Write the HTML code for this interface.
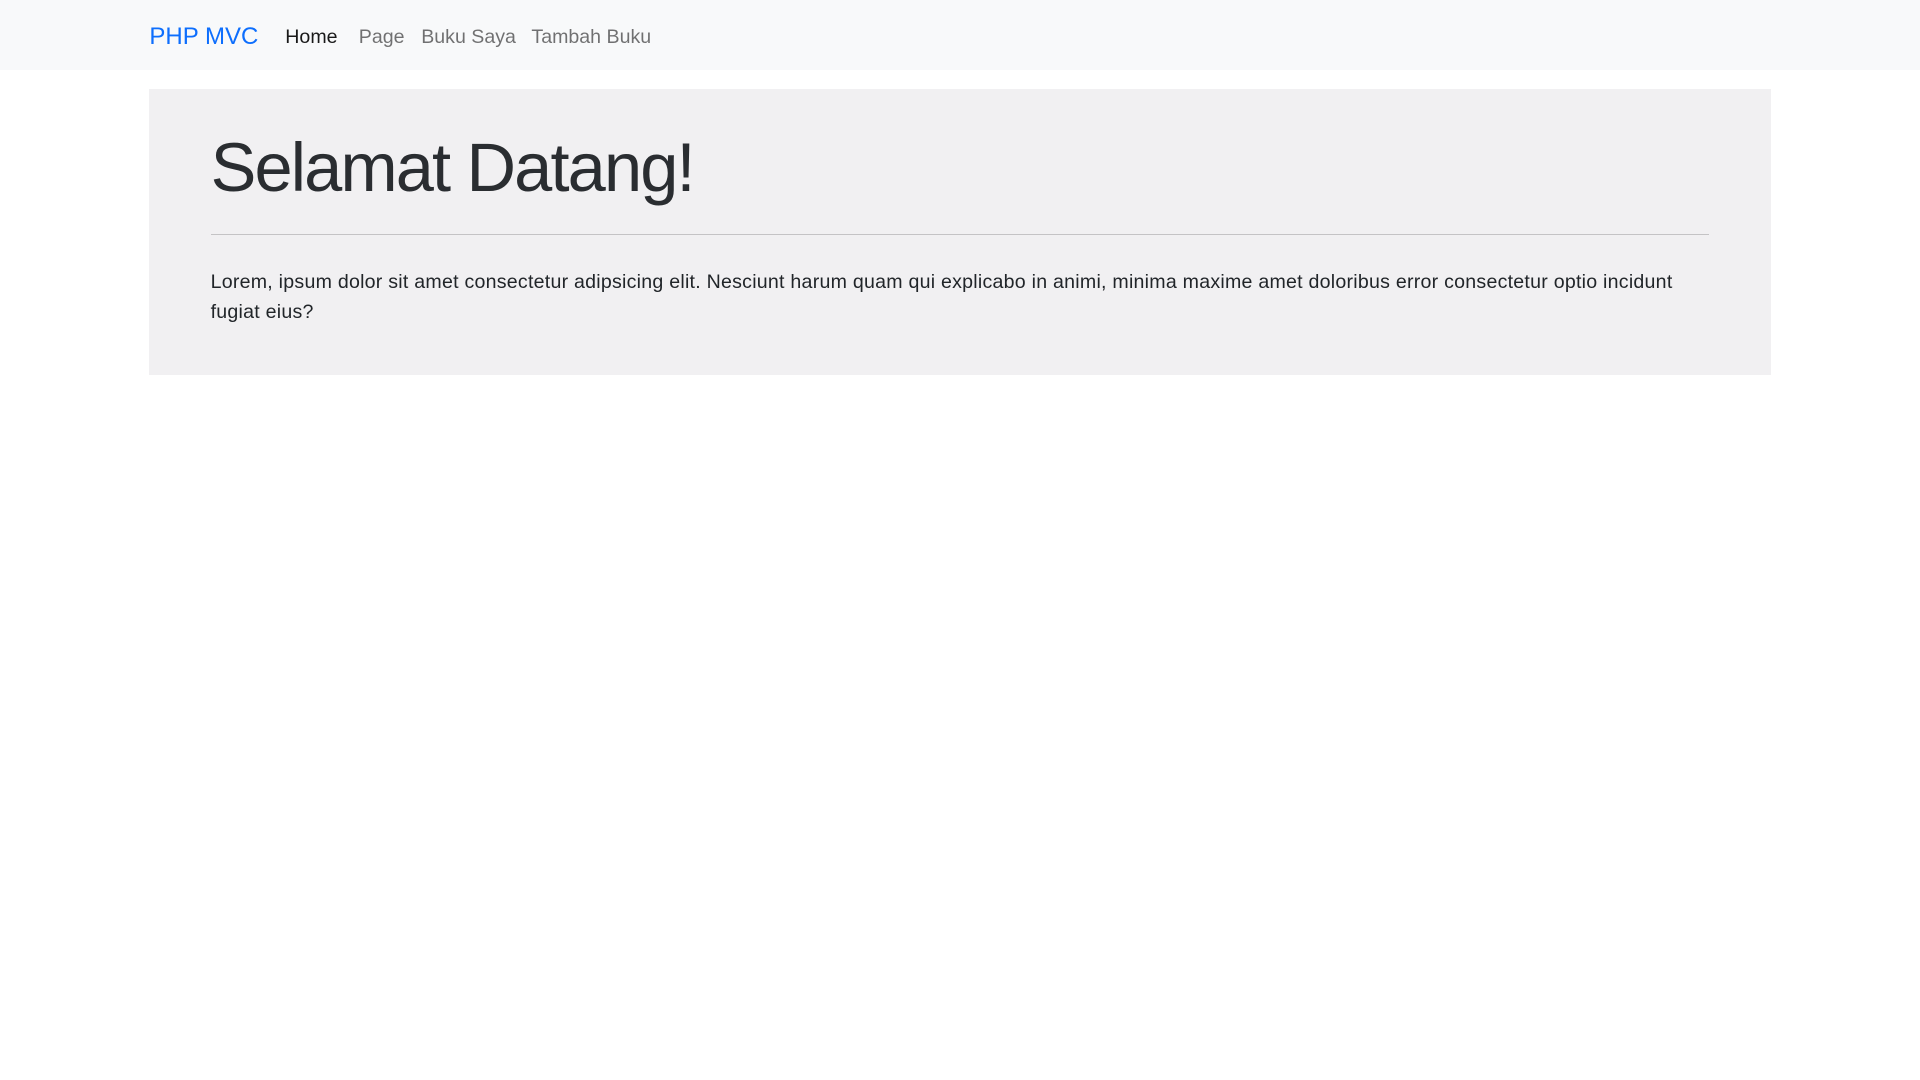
<!DOCTYPE html>
<html><head><meta charset="utf-8"><style>
html,body{margin:0;padding:0;background:#fff;}
#w{zoom:1.2245;width:1568px;height:882px;position:relative;font-family:"Liberation Sans",sans-serif;color:#212529;}
.nav{position:absolute;left:0;top:0;width:1568px;height:57px;background:#f8f9fa;}
.nav span{position:absolute;top:21px;font-size:16px;color:rgba(0,0,0,.55);white-space:nowrap;}
.nav .brand{font-size:19.6px;color:#0d6efd;top:19px;}
.jumbo{position:absolute;left:122px;top:73px;width:1324px;height:233px;background:#f1f0f2;}
h1{position:absolute;left:50px;top:31px;margin:0;font-weight:300;font-size:56px;line-height:1.2;white-space:nowrap;letter-spacing:-1.5px;color:#2a2d31;}
hr{position:absolute;left:50px;top:118px;width:1224px;margin:0;border:0;border-top:1px solid #c4c3c5;}
p{position:absolute;left:50px;top:146px;margin:0;font-size:16px;line-height:24px;white-space:nowrap;letter-spacing:0.2px;}
</style></head><body><div id="w">
<div class="nav">
<span class="brand" style="left:122px">PHP MVC</span>
<span style="left:233px;color:rgba(0,0,0,.9)">Home</span>
<span style="left:293px">Page</span>
<span style="left:344px">Buku Saya</span>
<span style="left:434px">Tambah Buku</span>
</div>
<div class="jumbo">
<h1>Selamat Datang!</h1>
<hr>
<p>Lorem, ipsum dolor sit amet consectetur adipsicing elit. Nesciunt harum quam qui explicabo in animi, minima maxime amet doloribus error consectetur optio incidunt<br>fugiat eius?</p>
</div>
</div></body></html>
